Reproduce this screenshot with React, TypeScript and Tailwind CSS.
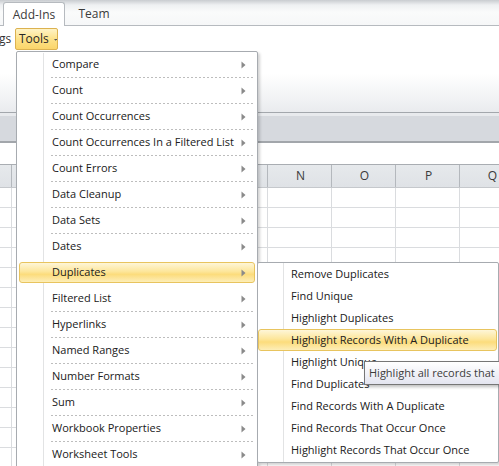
import React from "react";

const FONT = { fontFamily: '"Segoe UI", "Open Sans", "Noto Sans", sans-serif' };

const mainItems = [
  "Compare",
  "Count",
  "Count Occurrences",
  "Count Occurrences In a Filtered List",
  "Count Errors",
  "Data Cleanup",
  "Data Sets",
  "Dates",
  "Duplicates",
  "Filtered List",
  "Hyperlinks",
  "Named Ranges",
  "Number Formats",
  "Sum",
  "Workbook Properties",
  "Worksheet Tools",
];

const subItems = [
  "Remove Duplicates",
  "Find Unique",
  "Highlight Duplicates",
  "Highlight Records With A Duplicate",
  "Highlight Unique",
  "Find Duplicates",
  "Find Records With A Duplicate",
  "Find Records That Occur Once",
  "Highlight Records That Occur Once",
];

const cols = ["", "", "", "", "N", "O", "P", "Q"];

function Arrow() {
  return (
    <svg width="5" height="8" viewBox="0 0 5 8" className="absolute right-[10px] top-[9px]">
      <path d="M0.5 0.5 L4.5 4 L0.5 7.5 Z" fill="#8a8a8a" />
    </svg>
  );
}

export default function App() {
  return (
    <div
      className="relative w-[499px] h-[466px] overflow-hidden bg-white text-[11px] text-[#202020]"
      style={FONT}
    >
      {/* Tab strip */}
      <div className="h-[26px] flex items-end border-b border-[#b6babf] bg-[linear-gradient(to_bottom,#c9ccd0_0px,#eef0f2_5px,#fafbfb_12px,#f6f7f8_100%)] pl-[3px] text-[12px]">
        <div className="h-[24px] w-[62px] -mb-px bg-white border border-b-0 border-[#b6babf] rounded-t-[3px] flex items-center justify-center text-[#3b3b3b]">
          Add-Ins
        </div>
        <div className="h-[23px] w-[58px] flex items-center justify-center text-[#3b3b3b]">
          Team
        </div>
      </div>

      {/* Ribbon body */}
      <div className="h-[86px] bg-[linear-gradient(to_bottom,#ffffff_0%,#ffffff_55%,#f1f2f4_85%,#e9ebee_100%)] pt-[2px] text-[12px]">
        <div className="flex items-center h-[22px]">
          <span className="w-[16px] -ml-[1px] text-[#333]">gs</span>
          <div className="h-[22px] w-[43px] rounded-[2px] border border-[#dcb250] bg-[linear-gradient(to_bottom,#fef3c6_0%,#fde28a_50%,#fbd56a_100%)] flex items-center pl-[3px] text-[#262626]">
            Tools
            <svg width="6" height="4" viewBox="0 0 6 4" className="ml-[5px] mt-[1px]">
              <path d="M0 0 L6 0 L3 3.5 Z" fill="#5a5a5a" />
            </svg>
          </div>
        </div>
      </div>

      {/* Grey bars */}
      <div className="h-px bg-[#a3a7ac]" />
      <div className="h-[3px] bg-[#e8eaed]" />
      <div className="h-[25px] bg-[#d6d9de]" />
      <div className="h-[2px] bg-[#a2a6ab]" />
      <div className="h-[21px] bg-white" />

      {/* Column headers */}
      <div className="h-[24px] flex border-t border-[#a9adb2] border-b border-b-[#c5c8cc] bg-[linear-gradient(to_bottom,#e6e9ec,#dfe2e6)]">
        <div className="w-[12px] shrink-0 border-r border-[#b4b8bd]" />
        {cols.map((c, i) => (
          <div
            key={i}
            className="w-[64px] shrink-0 border-r border-[#b4b8bd] flex items-center justify-center pl-[2px] text-[12px] text-[#3a3a3a]"
          >
            {c}
          </div>
        ))}
      </div>

      {/* Grid */}
      <div className="flex flex-col">
        {Array.from({ length: 14 }).map((_, r) => (
          <div key={r} className="h-[20px] flex border-b border-[#dadcdf]">
            <div className="w-[12px] shrink-0 border-r border-[#dadcdf]" />
            {cols.map((_c, i) => (
              <div key={i} className="w-[64px] shrink-0 border-r border-[#dadcdf]" />
            ))}
          </div>
        ))}
      </div>

      {/* Main menu */}
      <div className="absolute left-[16px] top-[51px] w-[242px] h-[430px] bg-white border border-[#a7abb0] rounded-[2px] shadow-[2px_2px_3px_rgba(0,0,0,0.18)] px-px">
        <div className="absolute left-[26px] top-px bottom-0 w-px bg-[#e2e3e4]" />
        {mainItems.map((label, i) => {
          const active = label === "Duplicates";
          return (
            <div key={label} className="relative h-[26px]">
              {active && (
                <div className="absolute left-px right-[1px] top-[2px] h-[21px] rounded-[3px] border border-[#e8c45e] bg-[linear-gradient(to_bottom,#fef6d8_0%,#fde69a_45%,#fcdc7c_60%,#fdeeb8_100%)]" />
              )}
              <div className="relative h-[25px] flex items-center pl-[34px] whitespace-nowrap">
                {label}
              </div>
              <Arrow />
              {!active && mainItems[i + 1] !== "Duplicates" ? (
                <div className="h-px ml-[33px] mr-[1px] bg-[repeating-linear-gradient(to_right,#bdbdbd_0px,#bdbdbd_2px,transparent_2px,transparent_4px)]" />
              ) : (
                <div className="h-px" />
              )}
            </div>
          );
        })}
      </div>

      {/* Submenu */}
      <div className="absolute left-[257px] top-[262px] w-[242px] h-[201px] bg-white border border-[#a7abb0] rounded-[2px] shadow-[2px_2px_3px_rgba(0,0,0,0.18)]">
        <div className="absolute left-[25px] top-0 bottom-0 w-px bg-[#e2e3e4]" />
        {subItems.map((label, i) => {
          const active = i === 3;
          return (
            <div key={label} className="relative h-[22px]">
              {active && (
                <div className="absolute left-0 right-px top-0 h-[22px] rounded-[3px] border border-[#e8c45e] bg-[linear-gradient(to_bottom,#fef6d8_0%,#fde69a_45%,#fcdc7c_60%,#fdeeb8_100%)]" />
              )}
              <div className="relative h-[22px] flex items-center pl-[33px] whitespace-nowrap">
                {label}
              </div>
            </div>
          );
        })}
      </div>

      {/* Tooltip */}
      <div className="absolute left-[364px] top-[361px] w-[220px] h-[24px] border border-[#767676] bg-[linear-gradient(to_bottom,#ffffff,#e4e5f0)] shadow-[2px_2px_3px_rgba(0,0,0,0.25)] flex items-center pl-[4px] whitespace-nowrap text-[#3c3c3c] text-[11px]">
        Highlight all records that
      </div>
    </div>
  );
}
